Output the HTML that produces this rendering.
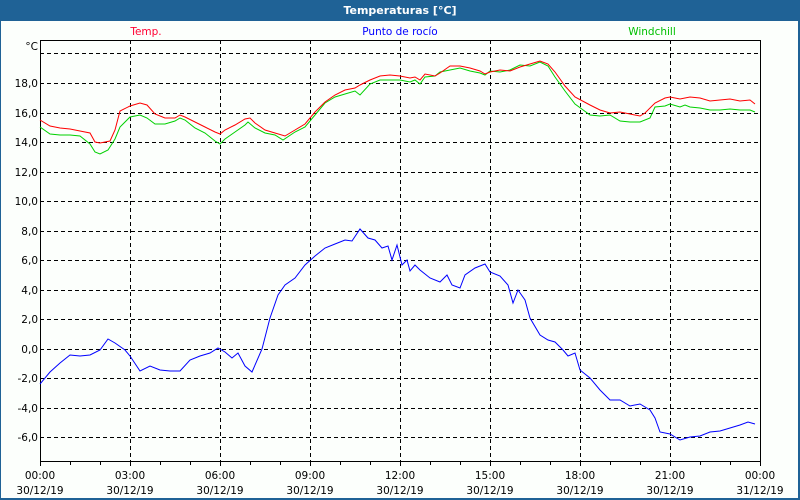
<!DOCTYPE html>
<html><head><meta charset="utf-8"><style>
body{margin:0;width:800px;height:500px;overflow:hidden;background:#1f6296;font-family:"DejaVu Sans","Liberation Sans",sans-serif;}
</style></head><body>
<svg width="800" height="500" xmlns="http://www.w3.org/2000/svg" style="display:block">
<rect x="0" y="0" width="800" height="500" fill="#1f6296"/>
<rect x="1" y="21" width="797" height="477" fill="#fcfffc"/>
<text x="400" y="14" fill="#fff" font-size="11" font-weight="bold" text-anchor="middle">Temperaturas [°C]</text>
<g font-size="10.5" text-anchor="middle">
<text x="146" y="35" fill="#ff0033">Temp.</text>
<text x="400" y="35" fill="#0000ff">Punto de rocío</text>
<text x="652" y="35" fill="#00c000">Windchill</text>
</g>
<g stroke="#000" stroke-width="1" stroke-dasharray="4,3" fill="none">
<path d="M40 53.5H760M40 83.5H760M40 113.5H760M40 142.5H760M40 172.5H760M40 201.5H760M40 231.5H760M40 260.5H760M40 290.5H760M40 319.5H760M40 349.5H760M40 378.5H760M40 408.5H760M40 437.5H760"/>
<path d="M130.5 40V461M220.5 40V461M310.5 40V461M400.5 40V461M490.5 40V461M580.5 40V461M670.5 40V461"/>
</g>
<rect x="40.5" y="40.5" width="720" height="421" fill="none" stroke="#000"/>
<g stroke="#000"><path d="M40.5 461v5M70.5 461v4M100.5 461v4M130.5 461v5M160.5 461v4M190.5 461v4M220.5 461v5M250.5 461v4M280.5 461v4M310.5 461v5M340.5 461v4M370.5 461v4M400.5 461v5M430.5 461v4M460.5 461v4M490.5 461v5M520.5 461v4M550.5 461v4M580.5 461v5M610.5 461v4M640.5 461v4M670.5 461v5M700.5 461v4M730.5 461v4M760.5 461v5"/></g>
<g font-size="10.5" text-anchor="end" fill="#000">
<text x="38" y="50">°C</text>
<text x="38" y="87">18,0</text><text x="38" y="117">16,0</text><text x="38" y="146">14,0</text><text x="38" y="176">12,0</text><text x="38" y="205">10,0</text><text x="38" y="235">8,0</text><text x="38" y="264">6,0</text><text x="38" y="294">4,0</text><text x="38" y="323">2,0</text><text x="38" y="353">0,0</text><text x="38" y="382">-2,0</text><text x="38" y="412">-4,0</text><text x="38" y="441">-6,0</text>
</g>
<g font-size="10.5" text-anchor="middle" fill="#000">
<text x="40" y="479">00:00</text><text x="40" y="494">30/12/19</text>
<text x="130" y="479">03:00</text><text x="130" y="494">30/12/19</text>
<text x="220" y="479">06:00</text><text x="220" y="494">30/12/19</text>
<text x="310" y="479">09:00</text><text x="310" y="494">30/12/19</text>
<text x="400" y="479">12:00</text><text x="400" y="494">30/12/19</text>
<text x="490" y="479">15:00</text><text x="490" y="494">30/12/19</text>
<text x="580" y="479">18:00</text><text x="580" y="494">30/12/19</text>
<text x="670" y="479">21:00</text><text x="670" y="494">30/12/19</text>
<text x="760" y="479">00:00</text><text x="760" y="494">31/12/19</text>
</g>
<g fill="none" stroke-width="1">
<polyline stroke="#00d000" points="40,127 50,134 60,135 70,135 80,136 90,144 95,152 100,154 108,150 115,139 120,127 130,117 140,115 147,118 155,124 165,124 175,121 180,118 185,120 195,128 205,133 215,141 220,144 225,139 235,132 245,125 248,122 255,128 265,133 275,135 283,140 295,132 305,127 315,115 325,103 335,97 345,94 355,91 360,95 370,84 380,80 390,80 400,80 410,82 415,80 420,84 425,77 435,76 440,72 450,70 460,68 470,71 480,73 485,75 490,71 500,72 510,70 520,65 530,66 540,62 548,66 555,77 565,91 575,104 590,115 600,116 610,115 620,121 630,122 640,122 650,118 655,107 665,106 670,104 680,107 685,105 690,107 700,108 710,110 720,110 730,109 740,110 750,110 755,112"/>
<polyline stroke="#ff0000" points="40,120 50,126 60,128 70,129 80,131 90,133 95,142 100,143 110,141 115,130 120,111 130,106 140,103 147,105 155,114 165,118 175,118 180,115 185,117 195,122 205,127 215,132 220,134 225,130 235,125 245,119 250,118 255,123 265,130 275,133 285,136 295,130 305,124 315,112 325,102 335,95 345,90 355,88 360,85 370,80 380,76 390,75 400,76 410,78 415,77 420,80 425,74 435,76 440,73 450,66 460,66 470,68 480,71 485,74 490,72 500,70 510,71 520,67 530,64 540,61 548,64 555,72 565,86 575,97 590,105 600,110 610,113 620,112 630,114 640,116 645,113 655,103 665,98 670,97 680,99 690,97 700,98 710,101 720,100 730,99 740,101 750,100 755,104"/>
<polyline stroke="#0000ff" points="40,384 50,372 60,363 70,355 80,356 90,355 100,350 108,339 115,343 125,350 130,356 140,371 150,366 160,370 170,371 180,371 190,360 200,356 210,353 218,348 225,352 232,358 238,353 245,366 252,372 262,349 270,318 278,295 285,285 295,278 305,265 315,256 325,248 335,244 345,240 352,241 360,229 368,238 375,240 382,248 388,246 392,260 397,245 402,265 407,260 410,271 415,265 420,270 430,278 440,282 447,275 452,285 460,288 465,275 475,268 485,264 490,272 500,276 508,285 513,303 518,290 525,300 530,318 540,335 548,340 555,342 563,350 568,356 575,353 580,370 585,374 590,378 600,390 610,400 620,400 630,406 640,404 650,410 655,418 660,432 670,434 680,440 690,437 700,436 710,432 720,431 730,428 740,425 748,422 755,424"/>
</g>
</svg>
</body></html>
